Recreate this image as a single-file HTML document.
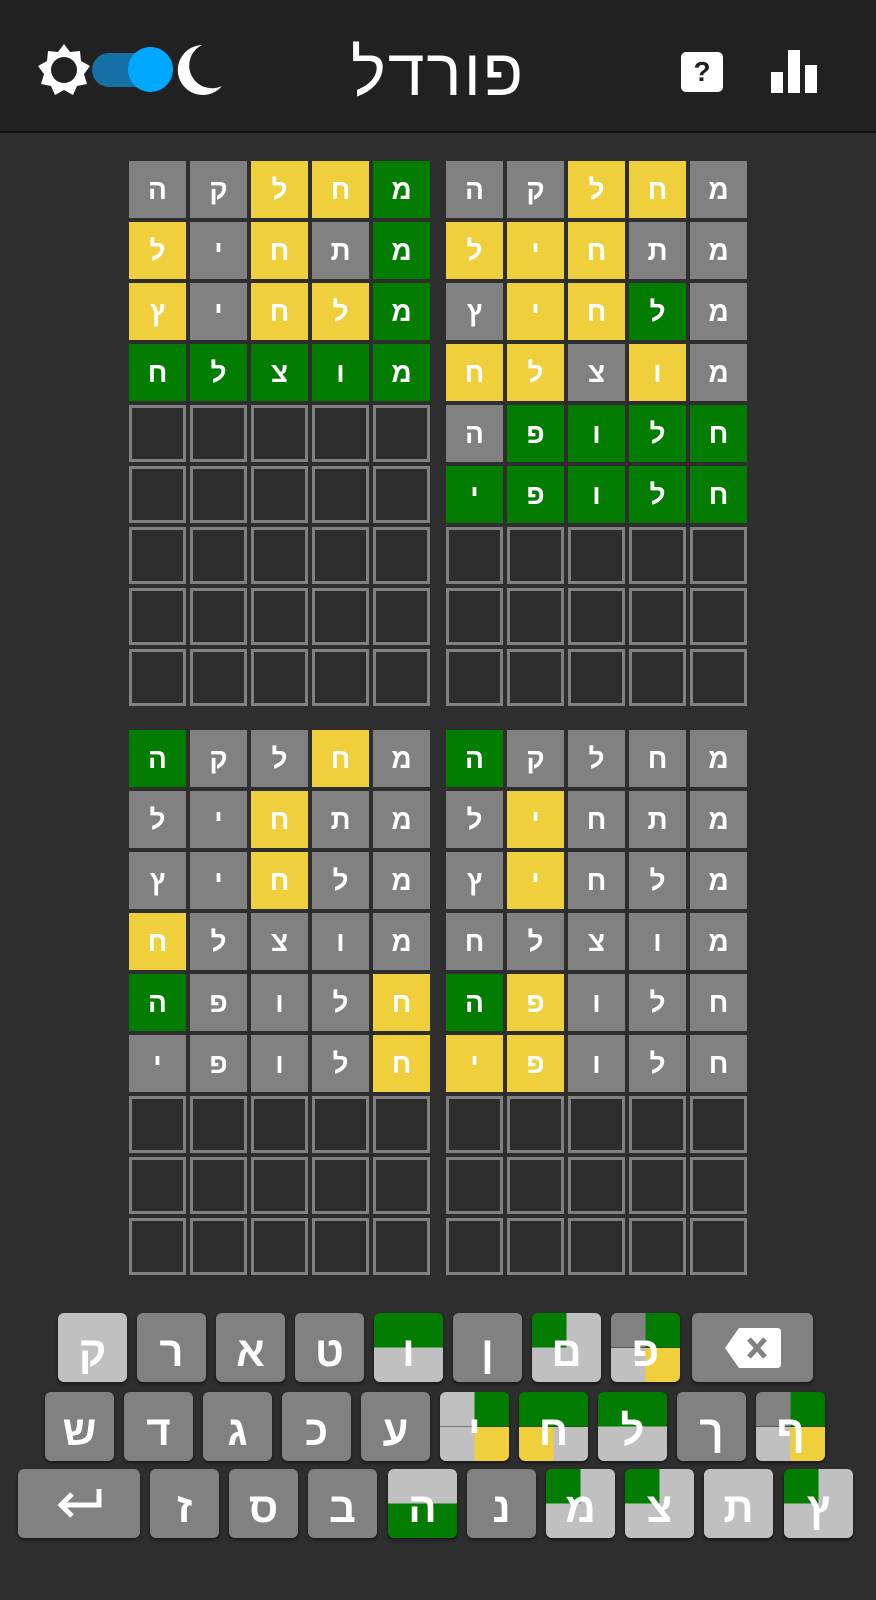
<!DOCTYPE html>
<html><head><meta charset="utf-8"><style>
*{box-sizing:border-box;margin:0;padding:0}
body{width:876px;height:1600px;background:#2e2e2e;font-family:"Liberation Sans","DejaVu Sans",sans-serif;position:relative;overflow:hidden;color:#fff}
.hdr{position:absolute;left:0;top:0;width:876px;height:133px;background:#212121;border-bottom:2px solid #111}
.title{position:absolute;left:0;width:876px;top:34px;text-align:center;font-size:66px;font-weight:normal;color:#fff;letter-spacing:2px}
.board{position:absolute;display:grid;grid-template-columns:repeat(5,57px);grid-auto-rows:57px;gap:4px;direction:rtl}
.board div{display:flex;align-items:center;justify-content:center;font-size:28px;font-weight:bold;color:#fff}
.x{background:#818181}.y{background:#efcf3b}.g{background:#027d02}
.e{border:3px solid #818181;background:#2d2d2d}
.k{position:absolute;width:69px;height:69px;border-radius:6px;background:#818181;display:flex;align-items:center;justify-content:center;padding-top:8px;font-size:42px;font-weight:bold;color:#fff;box-shadow:0 2px 3px rgba(0,0,0,.5)}
.l{background:#c0c0c0}
</style></head><body>
<div class="hdr">
<svg style="position:absolute;left:37px;top:43px" width="54" height="54" viewBox="0 0 54 54">
<polygon fill="#fff" points="27,1 33,9 43,8 44,18 53,23 47,31 50,41 40,43 36,52 27,47 18,52 14,43 4,41 7,31 1,23 10,18 11,8 21,9"/>
<circle cx="27" cy="27" r="13" fill="#212121"/>
</svg>
<div style="position:absolute;left:92px;top:53px;width:70px;height:34px;border-radius:17px;background:#1470a5"></div>
<div style="position:absolute;left:128px;top:47px;width:45px;height:45px;border-radius:50%;background:#00a9ff"></div>
<svg style="position:absolute;left:176px;top:44px" width="48" height="52" viewBox="0 0 48 52"><path d="M26 1 A25 25 0 1 0 46 42 A21 21 0 0 1 26 1Z" fill="#fff"/></svg>
<div class="title">פורדל</div>
<div style="position:absolute;left:681px;top:52px;width:42px;height:40px;border-radius:5px;background:#fff;color:#212121;font-size:28px;font-weight:bold;text-align:center;line-height:40px">?</div>
<div style="position:absolute;left:771px;top:72px;width:12px;height:21px;background:#fff"></div>
<div style="position:absolute;left:788px;top:50px;width:12px;height:43px;background:#fff"></div>
<div style="position:absolute;left:805px;top:65px;width:12px;height:28px;background:#fff"></div>
</div>

<div class="board" style="left:129px;top:161px">
<div class="g">מ</div><div class="y">ח</div><div class="y">ל</div><div class="x">ק</div><div class="x">ה</div>
<div class="g">מ</div><div class="x">ת</div><div class="y">ח</div><div class="x">י</div><div class="y">ל</div>
<div class="g">מ</div><div class="y">ל</div><div class="y">ח</div><div class="x">י</div><div class="y">ץ</div>
<div class="g">מ</div><div class="g">ו</div><div class="g">צ</div><div class="g">ל</div><div class="g">ח</div>
<div class="e"></div><div class="e"></div><div class="e"></div><div class="e"></div><div class="e"></div>
<div class="e"></div><div class="e"></div><div class="e"></div><div class="e"></div><div class="e"></div>
<div class="e"></div><div class="e"></div><div class="e"></div><div class="e"></div><div class="e"></div>
<div class="e"></div><div class="e"></div><div class="e"></div><div class="e"></div><div class="e"></div>
<div class="e"></div><div class="e"></div><div class="e"></div><div class="e"></div><div class="e"></div>
</div>

<div class="board" style="left:446px;top:161px">
<div class="x">מ</div><div class="y">ח</div><div class="y">ל</div><div class="x">ק</div><div class="x">ה</div>
<div class="x">מ</div><div class="x">ת</div><div class="y">ח</div><div class="y">י</div><div class="y">ל</div>
<div class="x">מ</div><div class="g">ל</div><div class="y">ח</div><div class="y">י</div><div class="x">ץ</div>
<div class="x">מ</div><div class="y">ו</div><div class="x">צ</div><div class="y">ל</div><div class="y">ח</div>
<div class="g">ח</div><div class="g">ל</div><div class="g">ו</div><div class="g">פ</div><div class="x">ה</div>
<div class="g">ח</div><div class="g">ל</div><div class="g">ו</div><div class="g">פ</div><div class="g">י</div>
<div class="e"></div><div class="e"></div><div class="e"></div><div class="e"></div><div class="e"></div>
<div class="e"></div><div class="e"></div><div class="e"></div><div class="e"></div><div class="e"></div>
<div class="e"></div><div class="e"></div><div class="e"></div><div class="e"></div><div class="e"></div>
</div>

<div class="board" style="left:129px;top:730px">
<div class="x">מ</div><div class="y">ח</div><div class="x">ל</div><div class="x">ק</div><div class="g">ה</div>
<div class="x">מ</div><div class="x">ת</div><div class="y">ח</div><div class="x">י</div><div class="x">ל</div>
<div class="x">מ</div><div class="x">ל</div><div class="y">ח</div><div class="x">י</div><div class="x">ץ</div>
<div class="x">מ</div><div class="x">ו</div><div class="x">צ</div><div class="x">ל</div><div class="y">ח</div>
<div class="y">ח</div><div class="x">ל</div><div class="x">ו</div><div class="x">פ</div><div class="g">ה</div>
<div class="y">ח</div><div class="x">ל</div><div class="x">ו</div><div class="x">פ</div><div class="x">י</div>
<div class="e"></div><div class="e"></div><div class="e"></div><div class="e"></div><div class="e"></div>
<div class="e"></div><div class="e"></div><div class="e"></div><div class="e"></div><div class="e"></div>
<div class="e"></div><div class="e"></div><div class="e"></div><div class="e"></div><div class="e"></div>
</div>

<div class="board" style="left:446px;top:730px">
<div class="x">מ</div><div class="x">ח</div><div class="x">ל</div><div class="x">ק</div><div class="g">ה</div>
<div class="x">מ</div><div class="x">ת</div><div class="x">ח</div><div class="y">י</div><div class="x">ל</div>
<div class="x">מ</div><div class="x">ל</div><div class="x">ח</div><div class="y">י</div><div class="x">ץ</div>
<div class="x">מ</div><div class="x">ו</div><div class="x">צ</div><div class="x">ל</div><div class="x">ח</div>
<div class="x">ח</div><div class="x">ל</div><div class="x">ו</div><div class="y">פ</div><div class="g">ה</div>
<div class="x">ח</div><div class="x">ל</div><div class="x">ו</div><div class="y">פ</div><div class="y">י</div>
<div class="e"></div><div class="e"></div><div class="e"></div><div class="e"></div><div class="e"></div>
<div class="e"></div><div class="e"></div><div class="e"></div><div class="e"></div><div class="e"></div>
<div class="e"></div><div class="e"></div><div class="e"></div><div class="e"></div><div class="e"></div>
</div>

<!-- row 1 -->
<div class="k l" style="left:58px;top:1313px">ק</div>
<div class="k" style="left:137px;top:1313px">ר</div>
<div class="k" style="left:216px;top:1313px">א</div>
<div class="k" style="left:295px;top:1313px">ט</div>
<div class="k" style="left:374px;top:1313px;background:linear-gradient(#027d02 50%,#c0c0c0 50%)">ו</div>
<div class="k" style="left:453px;top:1313px">ן</div>
<div class="k" style="left:532px;top:1313px;background:linear-gradient(to right,#027d02 50%,#c0c0c0 50%) top/100% 50% no-repeat,#c0c0c0">ם</div>
<div class="k" style="left:611px;top:1313px;background:linear-gradient(to right,#818181 50%,#027d02 50%) top/100% 50% no-repeat,linear-gradient(to right,#c0c0c0 50%,#efcf3b 50%) bottom/100% 50% no-repeat">פ</div>
<div class="k" style="left:692px;top:1313px;width:121px;padding-top:0"><svg width="56" height="40" viewBox="0 0 56 40"><path d="M14 0H52Q56 0 56 4V36Q56 40 52 40H14L0 20Z" fill="#fff"/><path d="M24 11L40 29M40 11L24 29" stroke="#818181" stroke-width="5"/></svg></div>
<!-- row 2 -->
<div class="k" style="left:45px;top:1392px">ש</div>
<div class="k" style="left:124px;top:1392px">ד</div>
<div class="k" style="left:203px;top:1392px">ג</div>
<div class="k" style="left:282px;top:1392px">כ</div>
<div class="k" style="left:361px;top:1392px">ע</div>
<div class="k" style="left:440px;top:1392px;background:linear-gradient(to right,#c0c0c0 50%,#027d02 50%) top/100% 50% no-repeat,linear-gradient(to right,#c0c0c0 50%,#efcf3b 50%) bottom/100% 50% no-repeat">י</div>
<div class="k" style="left:519px;top:1392px;background:linear-gradient(#027d02,#027d02) top/100% 50% no-repeat,linear-gradient(to right,#efcf3b 50%,#c0c0c0 50%) bottom/100% 50% no-repeat">ח</div>
<div class="k" style="left:598px;top:1392px;background:linear-gradient(#027d02 50%,#c0c0c0 50%)">ל</div>
<div class="k" style="left:677px;top:1392px">ך</div>
<div class="k" style="left:756px;top:1392px;background:linear-gradient(to right,#818181 50%,#027d02 50%) top/100% 50% no-repeat,linear-gradient(to right,#c0c0c0 50%,#efcf3b 50%) bottom/100% 50% no-repeat">ף</div>
<!-- row 3 -->
<div class="k" style="left:18px;top:1469px;width:122px;padding-top:0"><svg width="46" height="34" viewBox="0 0 46 34"><path d="M43 2V18H6M16 7L5 18L16 29" stroke="#fff" stroke-width="5" fill="none"/></svg></div>
<div class="k" style="left:150px;top:1469px">ז</div>
<div class="k" style="left:229px;top:1469px">ס</div>
<div class="k" style="left:308px;top:1469px">ב</div>
<div class="k" style="left:388px;top:1469px;background:linear-gradient(#c0c0c0 50%,#027d02 50%)">ה</div>
<div class="k" style="left:467px;top:1469px">נ</div>
<div class="k" style="left:546px;top:1469px;background:linear-gradient(to right,#027d02 50%,#c0c0c0 50%) top/100% 50% no-repeat,#c0c0c0">מ</div>
<div class="k" style="left:625px;top:1469px;background:linear-gradient(to right,#027d02 50%,#c0c0c0 50%) top/100% 50% no-repeat,#c0c0c0">צ</div>
<div class="k l" style="left:704px;top:1469px">ת</div>
<div class="k" style="left:784px;top:1469px;background:linear-gradient(to right,#027d02 50%,#c0c0c0 50%) top/100% 50% no-repeat,#c0c0c0">ץ</div>
</body></html>
